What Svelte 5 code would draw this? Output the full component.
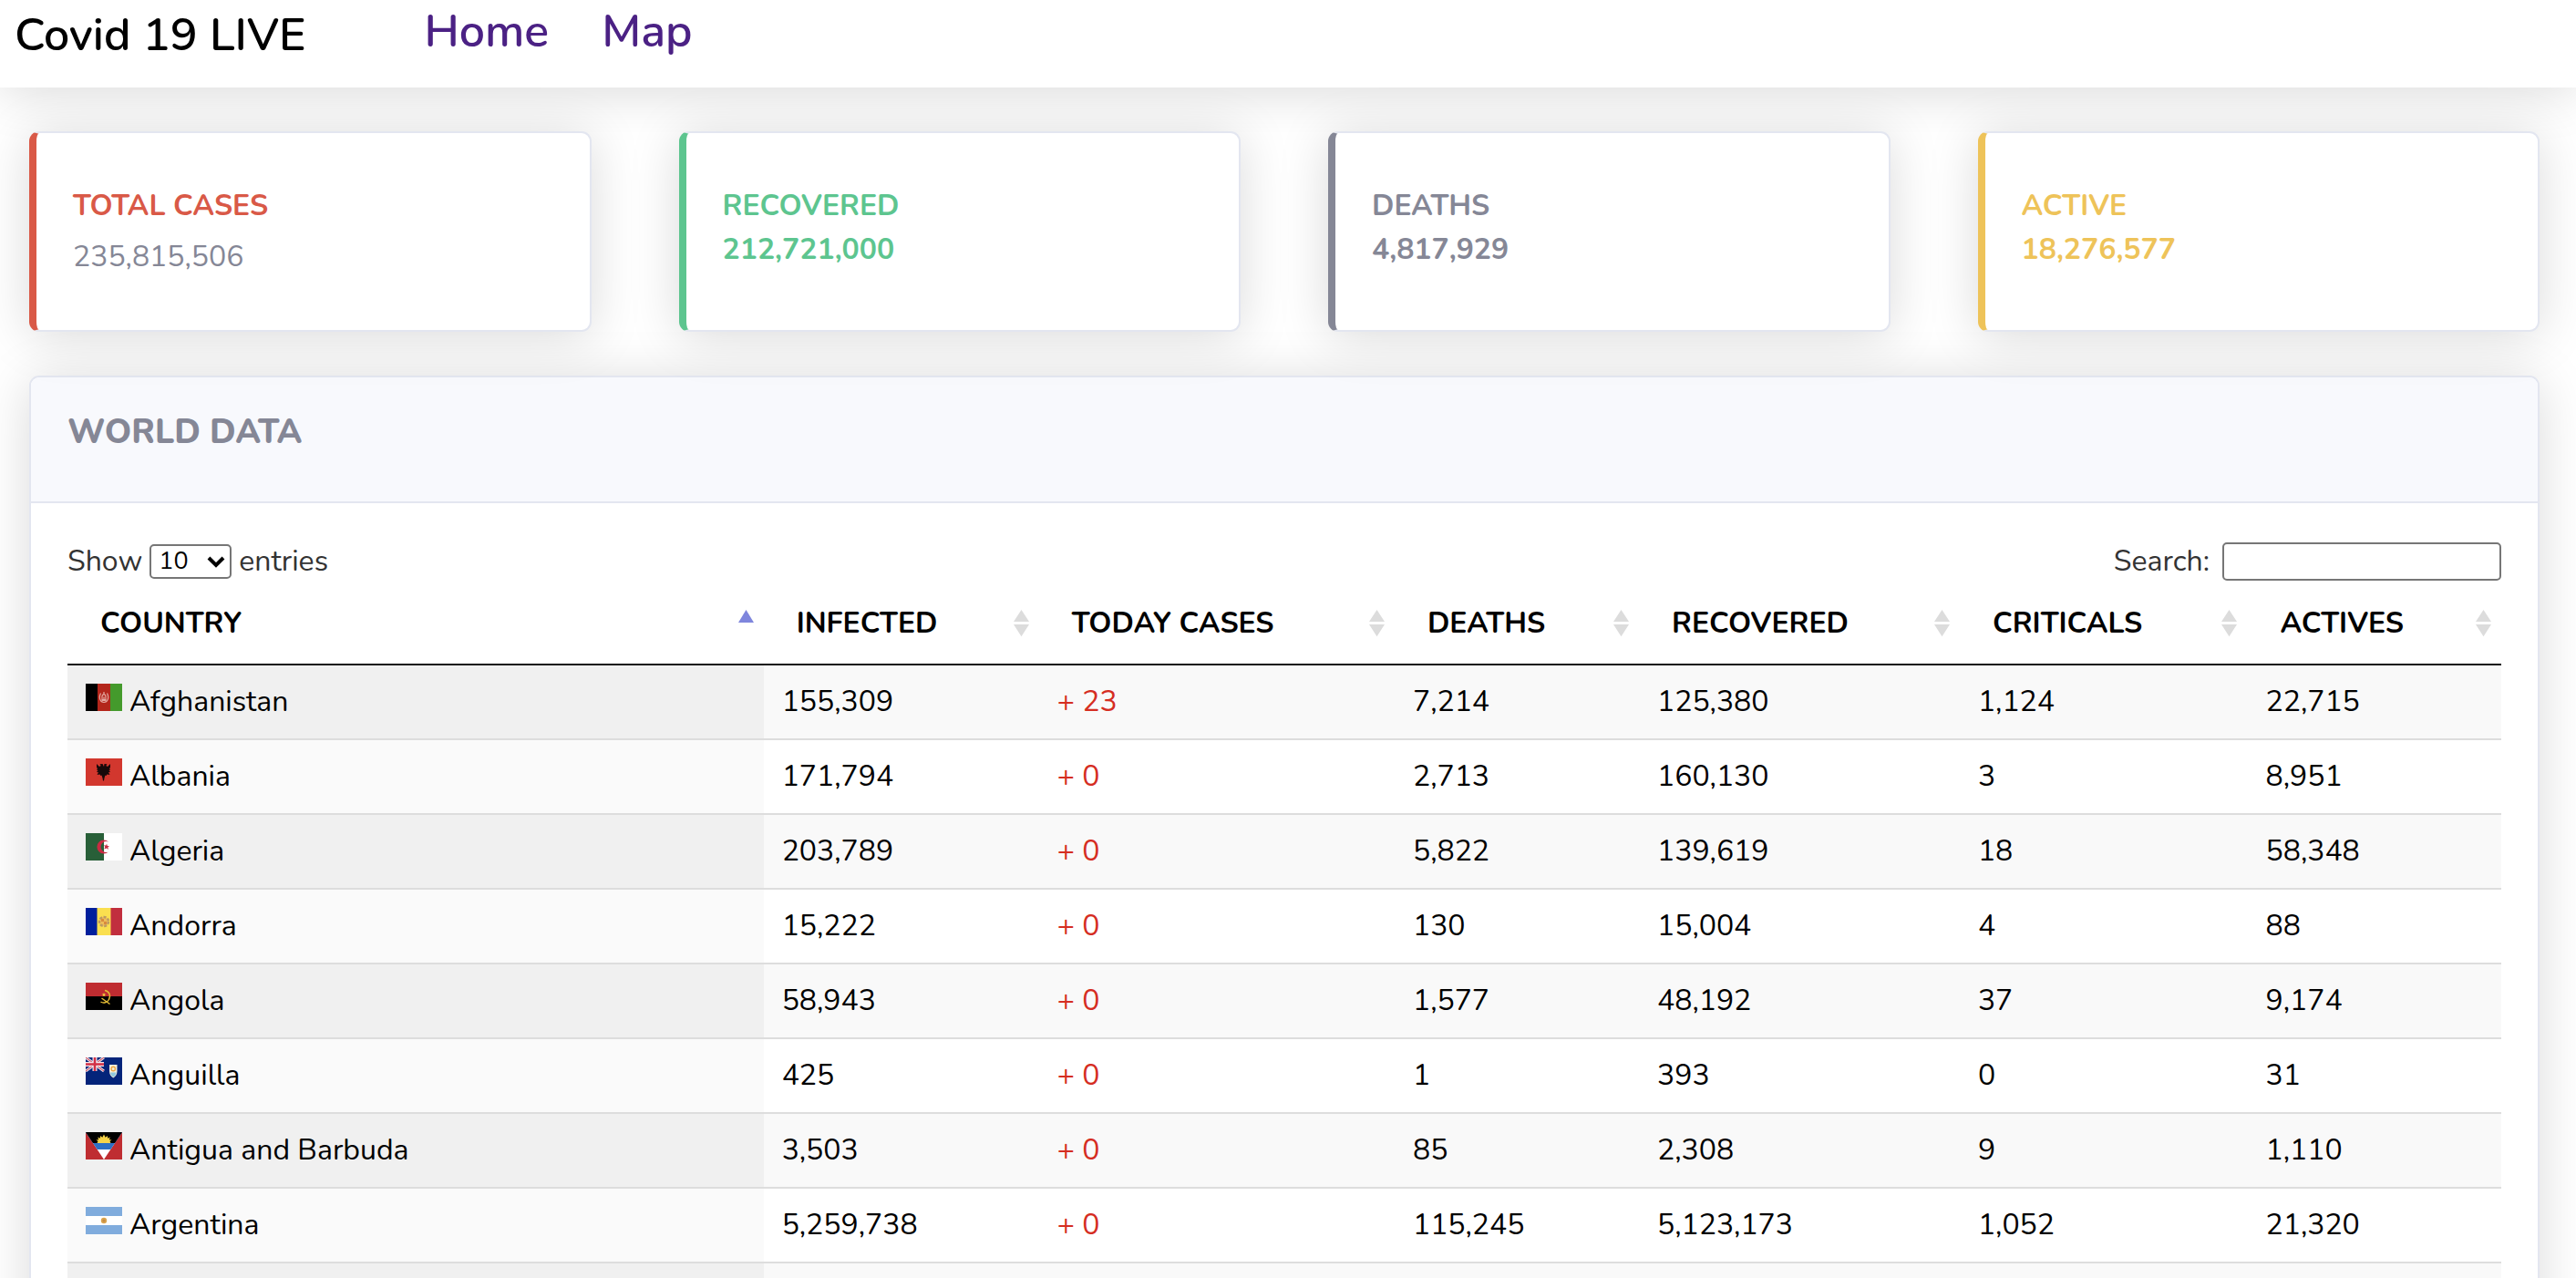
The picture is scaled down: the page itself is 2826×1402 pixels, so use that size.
<script>
  const stats = [
    { label: 'TOTAL CASES', value: '235,815,506', tone: 'red', light: true },
    { label: 'RECOVERED', value: '212,721,000', tone: 'green' },
    { label: 'DEATHS', value: '4,817,929', tone: 'gray' },
    { label: 'ACTIVE', value: '18,276,577', tone: 'yellow' }
  ];

  const columns = ['COUNTRY', 'INFECTED', 'TODAY CASES', 'DEATHS', 'RECOVERED', 'CRITICALS', 'ACTIVES'];

  const rows = [
    ['af', 'Afghanistan', '155,309', '23', '7,214', '125,380', '1,124', '22,715'],
    ['al', 'Albania', '171,794', '0', '2,713', '160,130', '3', '8,951'],
    ['dz', 'Algeria', '203,789', '0', '5,822', '139,619', '18', '58,348'],
    ['ad', 'Andorra', '15,222', '0', '130', '15,004', '4', '88'],
    ['ao', 'Angola', '58,943', '0', '1,577', '48,192', '37', '9,174'],
    ['ai', 'Anguilla', '425', '0', '1', '393', '0', '31'],
    ['ag', 'Antigua and Barbuda', '3,503', '0', '85', '2,308', '9', '1,110'],
    ['ar', 'Argentina', '5,259,738', '0', '115,245', '5,123,173', '1,052', '21,320']
  ];
</script>

{#snippet flag(code)}
  <svg class="flag" viewBox="0 0 40 30" aria-hidden="true">
    {#if code === 'af'}
      <rect width="40" height="30" fill="#b3261b" />
      <rect width="13" height="30" fill="#000" />
      <rect x="27" width="13" height="30" fill="#449a2c" />
      <g fill="none" stroke="#e5a9a2" stroke-width="1.2">
        <path d="M16.5 10.5c-2.600 5 -.5 10 3.500 10s6.100-5 3.500-10" />
        <path d="M17.500 18.500h5M18 13.500c1-2.500 3-2.500 4 0v4h-4zM20 9v3M20 14.500v3" />
      </g>
    {:else if code === 'al'}
      <rect width="40" height="30" fill="#d2372e" />
      <path d="M20 9l-1.500-3-3 .3 1.200 1.700L15 9l-3-3v4l1 1-1 1.500 1.500.5-1.500 2 2 .2-1.500 2.800 3-.5 1 1.500 1-.5 1 3 .5 3 1 0 .5-3 1-3 1 .5 1-1.500 3 .5-1.500-2.800 2-.2-1.500-2 1.500-.5-1-1.500 1-1V6l-3 3-1.700-1 1.200-1.700-3-.3z" fill="#17090a" />
    {:else if code === 'dz'}
      <rect width="40" height="30" fill="#fff" />
      <rect width="20" height="30" fill="#285f38" />
      <path d="M25 9.500a7.500 7.500 0 1 0 0 11a6 6 0 1 1 0-11z" fill="#c82b42" />
      <path d="M23 11.500l.8 2.500 2.200.1-1.700 1.500.7 2.400-2-1.400-2.700 1 1-2.500-1.300-1.900 2.300.2z" fill="#c82b42" />
    {:else if code === 'ad'}
      <rect width="40" height="30" fill="#fadf4f" />
      <rect width="12.500" height="30" fill="#001f9c" />
      <rect x="27.500" width="12.500" height="30" fill="#c12e3e" />
      <circle cx="20" cy="15" r="5" fill="#eebd58" stroke="#bd9a62" stroke-width="2.500" stroke-dasharray="3 1.500" />
      <path d="M17 12h3v3h-3zM20 15h3v3h-3z" fill="#d98a3c" />
    {:else if code === 'ao'}
      <rect width="40" height="30" fill="#000" />
      <rect width="40" height="15" fill="#bf2c31" />
      <g fill="none" stroke="#e2ba35" stroke-width="1.500">
        <path d="M21 8.500c5 1 7 6 4.500 10c-2 3.500-6 4.500-9 2.500" />
        <path d="M17.500 17l9 6.500" />
      </g>
      <path d="M20 11l.6 1.500 1.600.1-1.200 1 .4 1.600-1.400-.9-1.400.9.4-1.600-1.200-1 1.600-.1z" fill="#f2d33c" />
    {:else if code === 'ai'}
      <rect width="40" height="30" fill="#04247a" />
      <path d="M0 0l20 15M20 0L0 15" stroke="#e8d9e2" stroke-width="3" />
      <path d="M0 0l20 15M20 0L0 15" stroke="#cf4254" stroke-width="1" />
      <path d="M10 0v15M0 7.500h20" stroke="#f0e6ec" stroke-width="5" />
      <path d="M10 0v15M0 7.500h20" stroke="#d22f45" stroke-width="2.500" />
      <path d="M26 8h8.500v7c0 4-2 6-4.250 7.500C28 21 26 19 26 15z" fill="#f5efdc" />
      <path d="M27 16.500h6.500c-.5 3-1.500 3.800-3.250 5c-1.700-1.200-2.700-2-3.250-5z" fill="#91c8de" />
      <circle cx="30.250" cy="12.500" r="2.200" fill="none" stroke="#eda745" stroke-width="1.400" />
    {:else if code === 'ag'}
      <rect width="40" height="30" fill="#bf2d31" />
      <path d="M0 0h40L20 30z" fill="#fff" />
      <path d="M0 0h40L27.330 19H12.670z" fill="#2c6fc4" />
      <path d="M0 0h40L32 12H8z" fill="#000" />
      <path d="M12.500 12l1-2-2-1.500 2.700-.3-1-2.700 2.600 1.200.3-2.700 2.200 1.800L20 2.500l1.700 3.300 2.200-1.800.3 2.700 2.600-1.200-1 2.700 2.700.3-2 1.500 1 2z" fill="#f6d348" />
    {:else}
      <rect width="40" height="30" fill="#fff" />
      <path d="M0 0h40v10H0zM0 20h40v10H0z" fill="#80acdd" />
      <circle cx="20" cy="15" r="3.200" fill="#dba550" />
      <circle cx="20" cy="15" r="1.500" fill="#c58a42" />
    {/if}
  </svg>
{/snippet}

<div class="page">
  <header class="navbar">
    <div class="brand">Covid 19 LIVE</div>
    <nav>
      <a href="#home">Home</a>
      <a href="#map">Map</a>
    </nav>
  </header>

  <main>
    <section class="stats">
      {#each stats as s}
        <article class="stat {s.tone}">
          <h2>{s.label}</h2>
          <p class:light={s.light}>{s.value}</p>
        </article>
      {/each}
    </section>

    <section class="panel">
      <div class="panel-head"><h1>WORLD DATA</h1></div>
      <div class="panel-body">
        <div class="controls">
          <label class="length">
            Show
            <span class="picker">
              <select>
                <option>10</option>
                <option>25</option>
                <option>50</option>
                <option>100</option>
              </select>
              <svg viewBox="0 0 20 16" aria-hidden="true"><path d="M2 4l8 8 8-8" /></svg>
            </span>
            entries
          </label>
          <label class="search">Search: <input type="search" /></label>
        </div>

        <table>
          <colgroup>
            <col class="c-country" /><col class="c-infected" /><col class="c-today" /><col class="c-deaths" />
            <col class="c-recovered" /><col class="c-criticals" /><col class="c-actives" />
          </colgroup>
          <thead>
            <tr>
              {#each columns as c, i}
                <th scope="col">
                  <div class="head">
                    {c}
                    <svg viewBox="0 0 18 32" aria-hidden="true">
                      {#if i === 0}
                        <path d="M9 0l9 15H0z" fill="#7f86dd" />
                      {:else}
                        <path d="M9 0l9 14H0zM0 17h18L9 31z" fill="#dcdcdc" />
                      {/if}
                    </svg>
                  </div>
                </th>
              {/each}
            </tr>
          </thead>
          <tbody>
            {#each rows as [code, name, infected, today, deaths, recovered, criticals, actives]}
              <tr>
                <td>{@render flag(code)}{name}</td>
                <td>{infected}</td>
                <td class="today">+ {today}</td>
                <td>{deaths}</td>
                <td>{recovered}</td>
                <td>{criticals}</td>
                <td>{actives}</td>
              </tr>
            {/each}
            <tr>
              {#each columns as _}<td></td>{/each}
            </tr>
          </tbody>
        </table>
      </div>
    </section>
  </main>
</div>

<style>
  :global(body) {
    background: #fff;
    overflow-x: hidden;
  }
  .page {
    font-family: Nunito, Lato, sans-serif;
    font-size: 32px;
    line-height: 48px;
    color: #000;
  }
  .navbar {
    display: flex;
    gap: 130px;
    height: 96px;
    box-sizing: border-box;
    padding: 0 16px;
    font-size: 50px;
    font-weight: 600;
    line-height: 78px;
    background: #fff;
    box-shadow: 0 5px 56px rgba(0, 0, 0, 0.15);
  }
  nav {
    display: flex;
    gap: 58px;
    line-height: 70px;
  }
  nav a {
    color: #4b2184;
    text-decoration: none;
  }
  main {
    padding: 48px 40px 48px 32px;
  }
  .stats {
    display: grid;
    grid-template-columns: repeat(4, 1fr);
    gap: 96px;
    margin-bottom: 48px;
  }
  .stat {
    box-sizing: border-box;
    min-height: 220px;
    padding: 56px 40px 52px;
    background: #fff;
    border: 2px solid #e3e6f0;
    border-left-width: 8px;
    border-radius: 11px;
    box-shadow: 0 5px 56px rgba(0, 0, 0, 0.15);
    font-weight: 700;
  }
  h1, h2, p {
    margin: 0;
  }
  h2 {
    font-size: 32px;
    line-height: 48px;
  }
  .stat p.light {
    margin-top: 8px;
    font-weight: 400;
    color: #858796;
  }
  .red { color: #d95947; border-left-color: #d95947; }
  .green { color: #5dc58f; border-left-color: #5dc58f; }
  .gray { color: #858796; border-left-color: #858796; }
  .yellow { color: #eec359; border-left-color: #eec359; }

  .panel {
    background: #fff;
    border: 2px solid #e3e6f0;
    border-radius: 11px;
    box-shadow: 0 5px 56px rgba(0, 0, 0, 0.15);
  }
  .panel-head {
    padding: 32px 40px 48px;
    background: #f8f9fd;
    border-bottom: 2px solid #e3e6f0;
    border-radius: 9px 9px 0 0;
  }
  h1 {
    font-size: 37px;
    font-weight: 800;
    line-height: 56px;
    color: #858796;
  }
  .panel-body {
    padding: 40px;
  }
  .controls {
    display: flex;
    justify-content: space-between;
    color: #333;
  }
  .controls label {
    display: flex;
    align-items: center;
    gap: 8px;
  }
  .controls .search {
    gap: 14px;
  }
  .picker {
    position: relative;
    display: flex;
  }
  select, input {
    box-sizing: border-box;
    border: 2px solid #767676;
    border-radius: 5px;
    background: #fff;
    font-family: inherit;
    font-size: 27px;
    color: #000;
    margin: 0;
  }
  select {
    appearance: none;
    width: 90px;
    height: 38px;
    padding: 0 8px;
    line-height: 32px;
  }
  .picker svg {
    position: absolute;
    right: 7px;
    top: 11px;
    width: 20px;
    height: 16px;
    fill: none;
    stroke: #000;
    stroke-width: 4;
    pointer-events: none;
  }
  input {
    width: 306px;
    height: 42px;
    padding: 2px 8px;
  }
  table {
    width: 100%;
    table-layout: fixed;
    border-collapse: separate;
    border-spacing: 0;
  }
  .c-country { width: 28.600%; }
  .c-infected { width: 11.320%; }
  .c-today { width: 14.610%; }
  .c-deaths { width: 10.040%; }
  .c-recovered { width: 13.180%; }
  .c-criticals { width: 11.820%; }
  .c-actives { width: 10.430%; }
  th {
    padding: 20px 11px 20px 36px;
    border-bottom: 2px solid #111;
    text-align: left;
    font-weight: 700;
  }
  .head {
    display: flex;
    justify-content: space-between;
    align-items: center;
  }
  .head svg {
    width: 17px;
    height: 32px;
  }
  td {
    height: 48px;
    padding: 16px 20px;
    border-top: 2px solid #ddd;
    white-space: nowrap;
  }
  tbody tr:first-child td {
    border-top: 0;
  }
  tbody tr:nth-child(odd) { background: #f9f9f9; }
  tbody tr:nth-child(odd) td:first-child { background: #f0f0f0; }
  tbody tr:nth-child(even) td:first-child { background: #fafafa; }
  td.today { color: #d52d22; }
  .flag {
    width: 40px;
    height: 30px;
    margin-right: 8px;
  }
</style>
